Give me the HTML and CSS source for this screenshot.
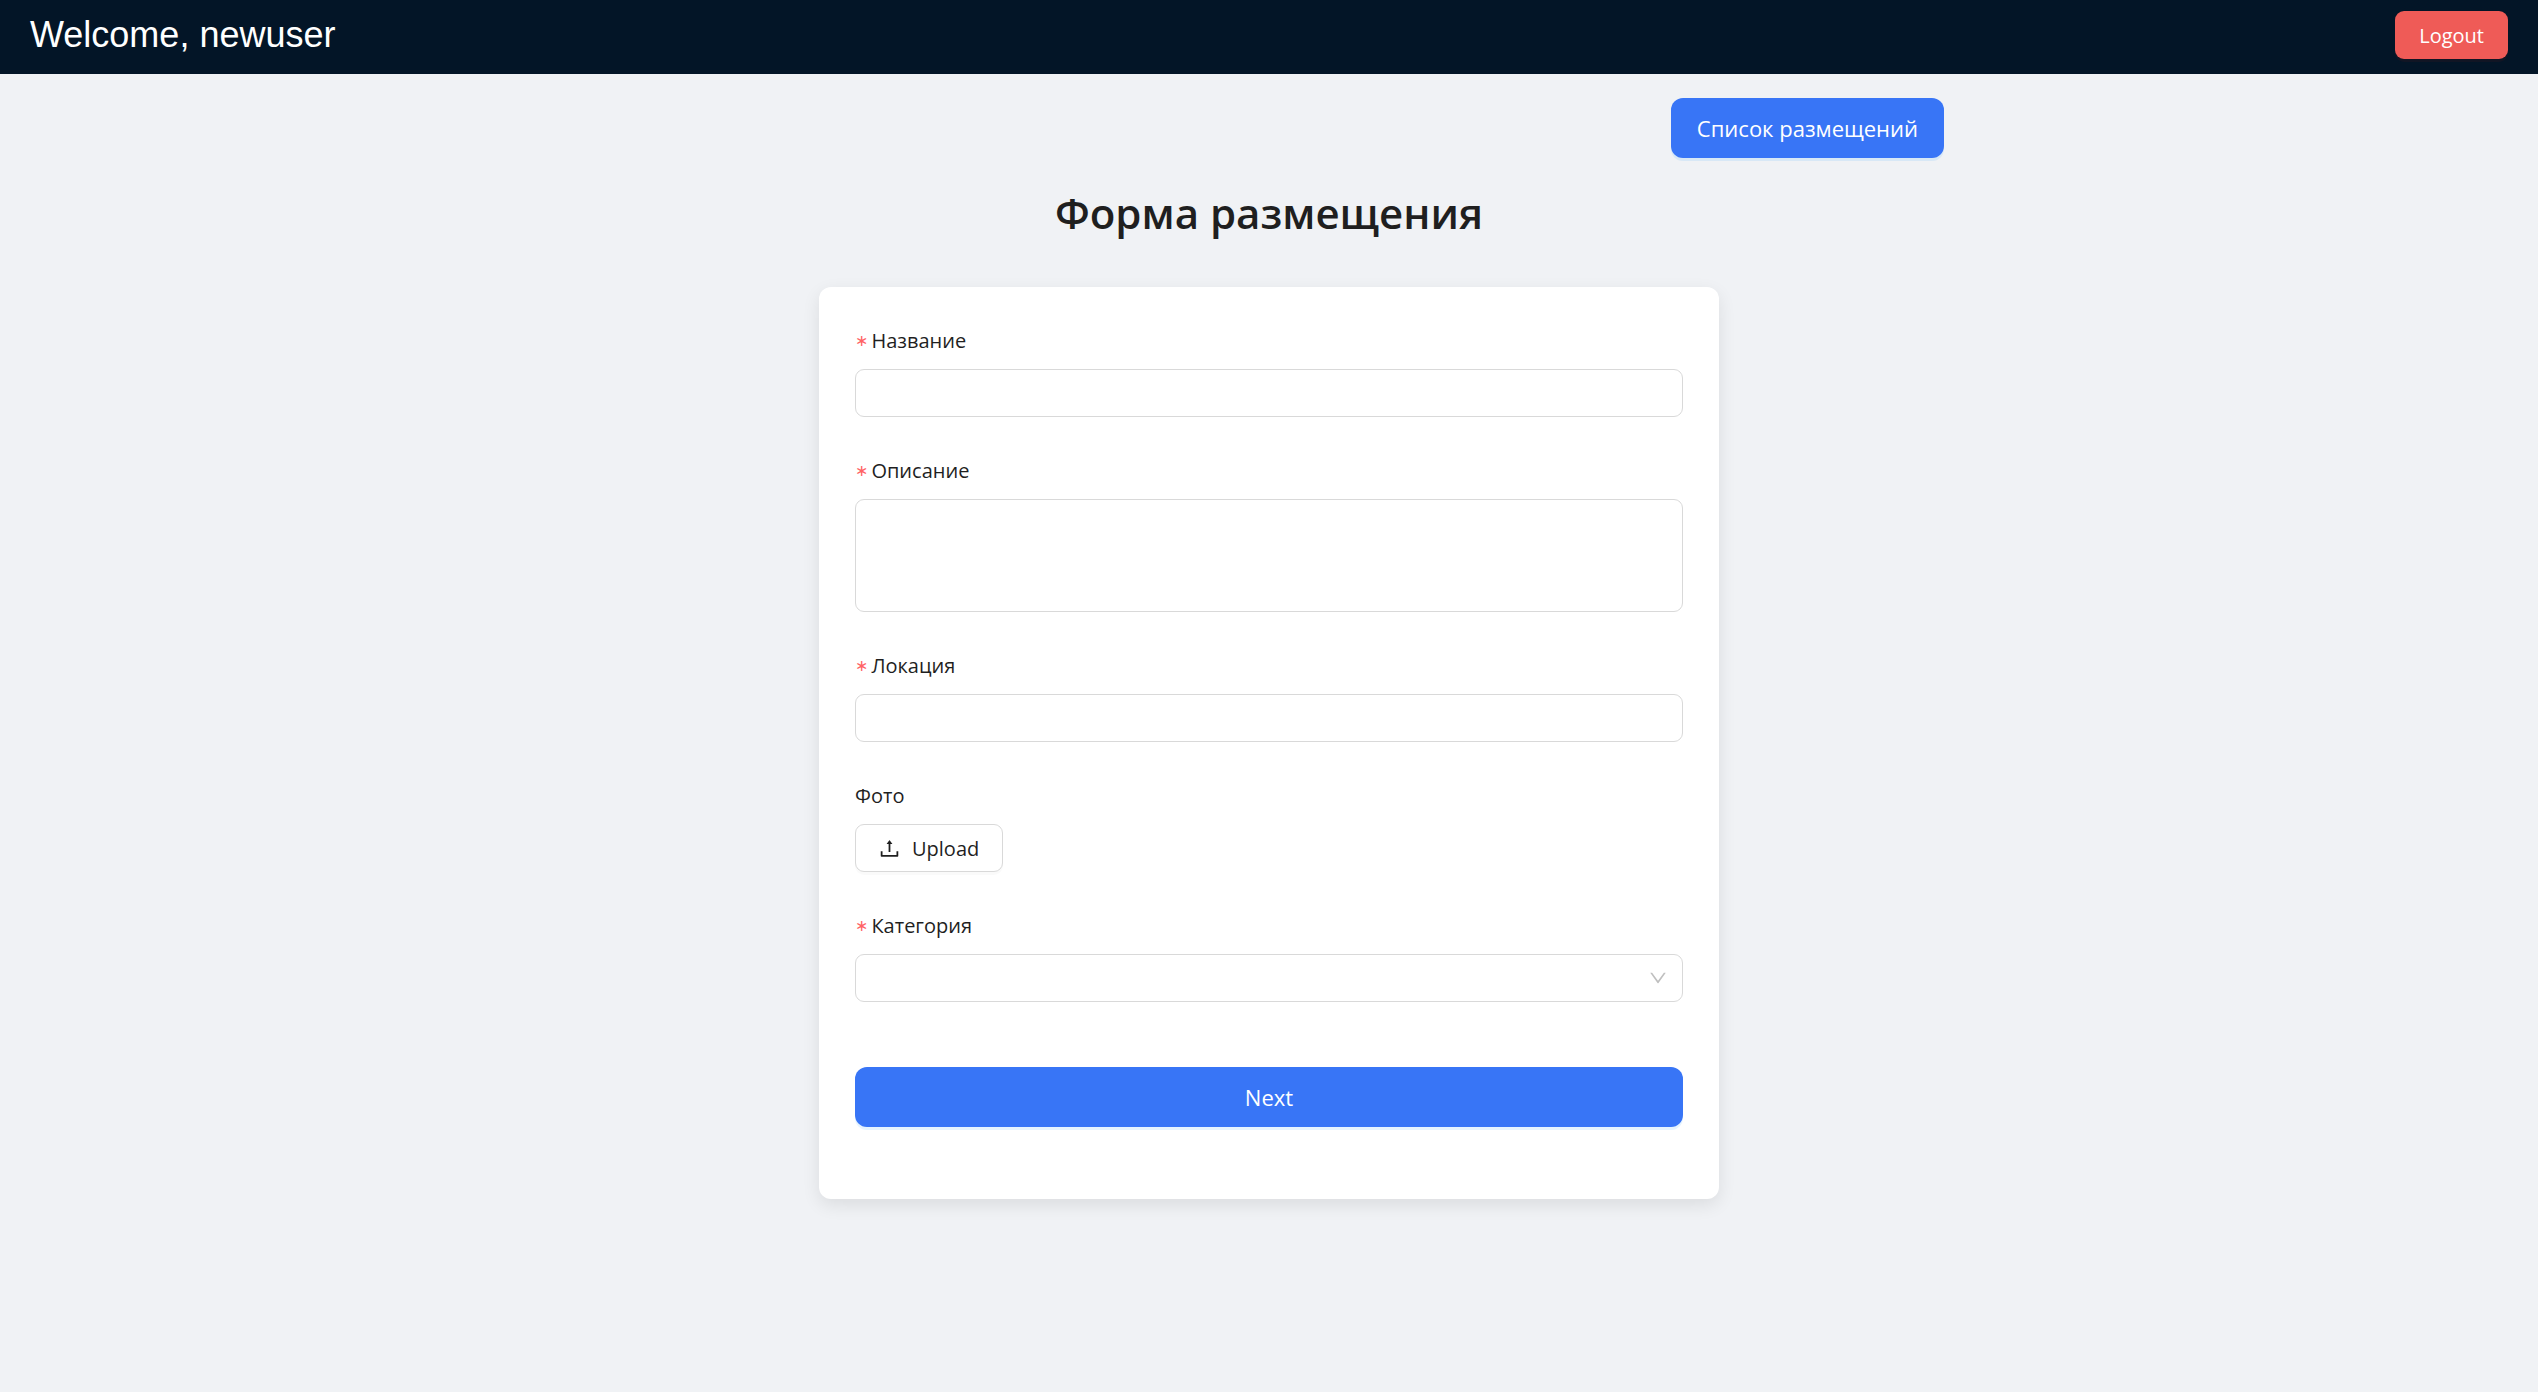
FILE: index.html
```html
<!DOCTYPE html>
<html lang="ru">
<head>
  <meta charset="utf-8">
  <meta name="viewport" content="width=device-width, initial-scale=1">
  <title>Форма размещения</title>
  <link rel="stylesheet" href="styles.css">
</head>
<body>
  <header class="topbar">
    <div class="welcome">Welcome, newuser</div>
    <button class="btn btn-danger" type="button">Logout</button>
  </header>
  <main class="container">
    <div class="actions">
      <button class="btn btn-primary btn-large" type="button">Список размещений</button>
    </div>
    <h1 class="title">Форма размещения</h1>
    <form class="card">
      <div class="field">
        <label class="label required" for="name">Название</label>
        <input class="control" id="name" type="text">
      </div>
      <div class="field">
        <label class="label required" for="description">Описание</label>
        <textarea class="control control-area" id="description"></textarea>
      </div>
      <div class="field">
        <label class="label required" for="location">Локация</label>
        <input class="control" id="location" type="text">
      </div>
      <div class="field">
        <label class="label" for="photo">Фото</label>
        <button class="btn btn-default" id="photo" type="button">
          <svg class="upload-icon" viewBox="64 64 896 896" aria-hidden="true"><path d="M400 317.700h73.900V656c0 4.400 3.600 8 8 8h60c4.400 0 8-3.600 8-8V317.700H624c6.700 0 10.400-7.700 6.300-12.900L518.300 163a8 8 0 0 0-12.600 0l-112 141.700c-4.100 5.300-.4 13 6.300 13zM878 626h-60c-4.400 0-8 3.600-8 8v154H214V634c0-4.400-3.600-8-8-8h-60c-4.400 0-8 3.600-8 8v198c0 17.700 14.300 32 32 32h684c17.700 0 32-14.300 32-32V634c0-4.400-3.600-8-8-8z"/></svg>
          <span>Upload</span>
        </button>
      </div>
      <div class="field">
        <label class="label required" for="category">Категория</label>
        <div class="select">
          <select class="control" id="category"><option value=""></option></select>
          <svg class="select-arrow" viewBox="64 64 896 896" aria-hidden="true"><path d="M884 256h-75c-5.100 0-9.900 2.500-12.900 6.600L512 654.200 227.900 262.600c-3-4.100-7.800-6.600-12.900-6.600h-75c-6.500 0-10.300 7.400-6.500 12.700l352.600 486.100c12.800 17.600 39 17.600 51.700 0l352.600-486.100c3.900-5.300.1-12.700-6.400-12.700z"/></svg>
        </div>
      </div>
      <button class="btn btn-primary btn-large btn-submit" type="submit">Next</button>
    </form>
  </main>
</body>
</html>
```
FILE: styles.css
```css
* {
  box-sizing: border-box;
}

body {
  margin: 0;
  min-height: 100vh;
  background: #f0f2f5;
  color: #1f1f1f;
  font-family: "Open Sans", "Noto Sans", sans-serif;
  font-size: 20px;
}

.topbar {
  display: flex;
  align-items: center;
  justify-content: space-between;
  padding: 11px 30px 15px;
  background: #031527;
}

.welcome {
  color: #fff;
  font-family: "Liberation Sans", Arial, sans-serif;
  font-size: 36px;
  line-height: 48px;
}

.container {
  max-width: 1350px;
  margin: 0 auto;
  padding-top: 24px;
}

.actions {
  display: flex;
  justify-content: flex-end;
}

.title {
  margin: 25px 0 44px;
  font-size: 42px;
  font-weight: 600;
  line-height: 60px;
  text-align: center;
}

.card {
  max-width: 900px;
  margin: 0 auto;
  padding: 36px 36px 72px;
  border-radius: 12px;
  background: #fff;
  box-shadow: 0 6px 18px rgba(0, 0, 0, 0.09);
}

.field {
  margin-bottom: 36px;
}

.label {
  display: flex;
  align-items: center;
  height: 35px;
  margin-bottom: 11px;
}

.required::before {
  content: "\2217";
  margin-right: 3px;
  color: #ff6466;
  font-family: "DejaVu Sans", sans-serif;
  font-size: 16px;
}

.control {
  display: block;
  width: 100%;
  height: 48px;
  padding: 6px 16px;
  border: 1px solid #d9d9d9;
  border-radius: 9px;
  background: #fff;
  color: inherit;
  font: inherit;
}

.control-area {
  height: 113px;
  resize: none;
}

.select {
  position: relative;
}

.select .control {
  appearance: none;
}

.select-arrow {
  position: absolute;
  top: 15px;
  right: 16px;
  width: 18px;
  height: 18px;
  fill: #bfbfbf;
  pointer-events: none;
}

.btn {
  display: flex;
  align-items: center;
  justify-content: center;
  gap: 12px;
  height: 48px;
  padding: 1px 23px 0;
  border: 1px solid transparent;
  border-radius: 9px;
  font: inherit;
  cursor: pointer;
}

.btn-default {
  border-color: #d9d9d9;
  background: #fff;
  color: inherit;
  box-shadow: 0 3px 0 rgba(0, 0, 0, 0.02);
}

.btn-danger {
  background: #ef5b57;
  color: #fff;
  box-shadow: 0 3px 0 rgba(255, 38, 5, 0.06);
}

.btn-primary {
  background: #3875f6;
  color: #fff;
  box-shadow: 0 3px 0 rgba(5, 145, 255, 0.1);
}

.btn-large {
  height: 60px;
  padding: 0 25px;
  border-radius: 12px;
  font-size: 22px;
}

.btn-submit {
  width: 100%;
  margin-top: 65px;
}

.upload-icon {
  width: 21px;
  height: 21px;
  fill: currentColor;
}
```
